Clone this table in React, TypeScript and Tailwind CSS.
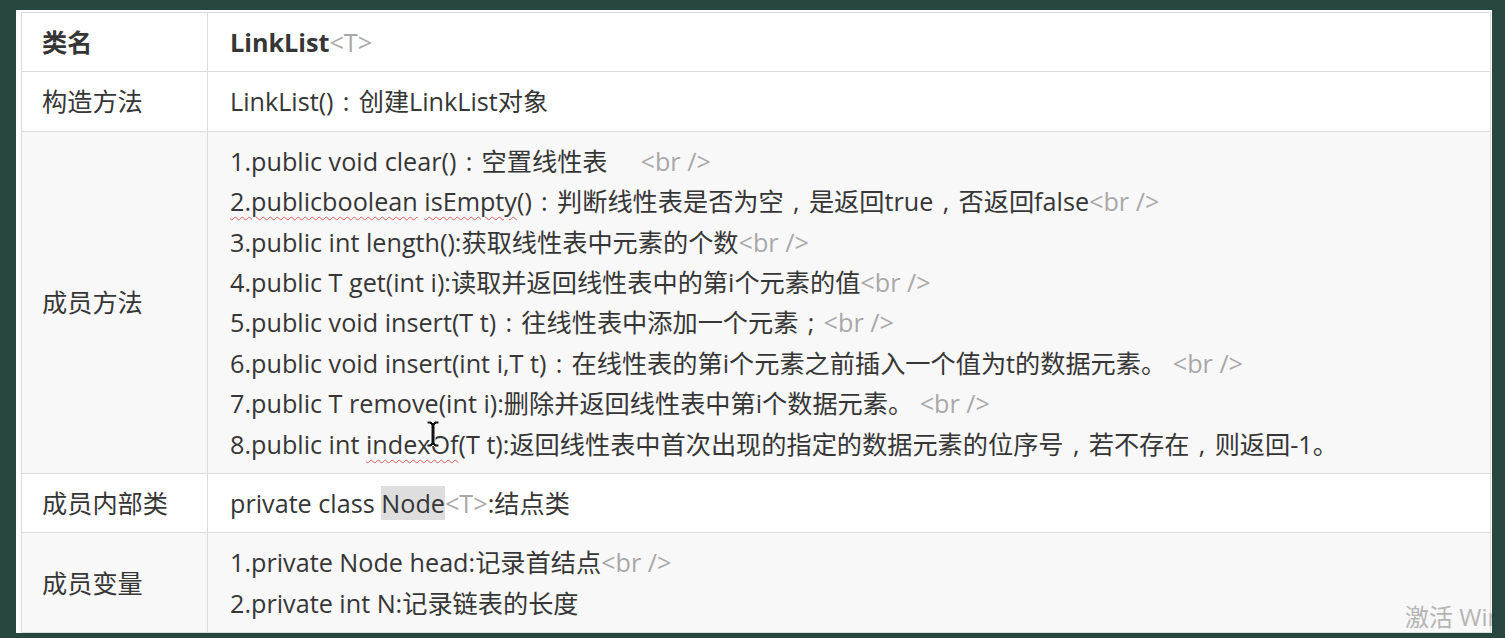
import React from "react";

const BR = () => <span className="text-[#a8a8a8]">&lt;br /&gt;</span>;

const wavy = "underline decoration-wavy decoration-[#e05a5a] decoration-1 underline-offset-[5px]";

// full-width punctuation: centered in its em box, sitting on the baseline
const PUNCT: Record<string, string> = { "：": ":", "，": ",", "；": ";" };

function P({ s }: { s: string }) {
  const parts = s.split(/([：，；])/);
  return (
    <>
      {parts.map((p, i) =>
        PUNCT[p] ? (
          <span key={i} className="inline-block w-[1em] text-center">{PUNCT[p]}</span>
        ) : (
          <React.Fragment key={i}>{p}</React.Fragment>
        )
      )}
    </>
  );
}

// one text line with a fixed height
const Line = ({ children }: { children: React.ReactNode }) => (
  <div className="h-[40.4px] whitespace-nowrap">{children}</div>
);

const METHODS: React.ReactNode[] = [
  <><P s="1.public void clear()：空置线性表" /><span className="inline-block w-[33px]" /><BR /></>,
  <>
    <span className={wavy}>2.publicboolean</span> <span className={wavy}>isEmpty</span>
    <P s="()：判断线性表是否为空，是返回true，否返回false" /><BR />
  </>,
  <>3.public int length():获取线性表中元素的个数<BR /></>,
  <>4.public T get(int i):读取并返回线性表中的第i个元素的值<BR /></>,
  <><P s="5.public void insert(T t)：往线性表中添加一个元素；" /><BR /></>,
  <><P s="6.public void insert(int i,T t)：在线性表的第i个元素之前插入一个值为t的数据元素。" /> <BR /></>,
  <>7.public T remove(int i):删除并返回线性表中第i个数据元素。 <BR /></>,
  <>
    8.public int <span className={wavy}>indexOf</span>
    <P s="(T t):返回线性表中首次出现的指定的数据元素的位序号，若不存在，则返回-1。" />
  </>,
];

function Cursor() {
  return (
    <svg className="absolute left-[409px] top-[409px]" width="16" height="30" viewBox="0 0 16 30">
      <path
        d="M2 2h4l2 2 2-2h4v3h-3l-1 1v18l1 1h3v3h-4l-2-2-2 2H2v-3h3l1-1V6L5 5H2z"
        fill="#111"
        stroke="#fff"
        strokeWidth="1"
      />
    </svg>
  );
}

export default function App() {
  const cell = "border border-[#dcdcdc] py-[9px] align-middle";
  return (
    <div
      className="w-[1505px] h-[638px] bg-[#27463f] pt-[10px] pl-[16px] text-[#363636] text-[25.2px] leading-[40.4px]"
      style={{ fontFamily: '"Open Sans", "Noto Sans CJK SC", sans-serif' }}
    >
      <div className="relative w-[1476px] h-[623px] bg-white pl-[5px] pt-[2px] overflow-hidden">
        <table className="w-[1470px] border-collapse">
          <tbody>
            <tr className="bg-white">
              <td className={`${cell} w-[186px] pl-[20px] font-bold py-[8px]`}>类名</td>
              <td className={`${cell} pl-[22px] py-[8px]`}>
                <span className="font-bold">LinkList</span>
                <span className="text-[#a8a8a8]">&lt;T&gt;</span>
              </td>
            </tr>
            <tr className="bg-white">
              <td className={`${cell} pl-[20px]`}>构造方法</td>
              <td className={`${cell} pl-[22px]`}>
                <Line><P s="LinkList()：创建LinkList对象" /></Line>
              </td>
            </tr>
            <tr className="bg-[#f8f8f8]">
              <td className={`${cell} pl-[20px]`}>成员方法</td>
              <td className={`${cell} pl-[22px]`}>
                {METHODS.map((m, i) => (
                  <Line key={i}>{m}</Line>
                ))}
              </td>
            </tr>
            <tr className="bg-white">
              <td className={`${cell} pl-[20px]`}>成员内部类</td>
              <td className={`${cell} pl-[22px]`}>
                <Line>
                  private class <span className="bg-[#dedede]">Node</span>
                  <span className="text-[#a8a8a8]">&lt;T&gt;</span>:结点类
                </Line>
              </td>
            </tr>
            <tr className="bg-[#f8f8f8]">
              <td className={`${cell} pl-[20px] py-[8px]`}>成员变量</td>
              <td className={`${cell} pl-[22px] py-[8px]`}>
                <Line>1.private Node head:记录首结点<BR /></Line>
                <Line>2.private int N:记录链表的长度</Line>
              </td>
            </tr>
          </tbody>
        </table>
        <Cursor />
        <div className="absolute left-[1389px] top-[592px] text-[24px] leading-[30px] text-[#b4b4b4] whitespace-nowrap">
          激活 Windows
        </div>
      </div>
    </div>
  );
}
